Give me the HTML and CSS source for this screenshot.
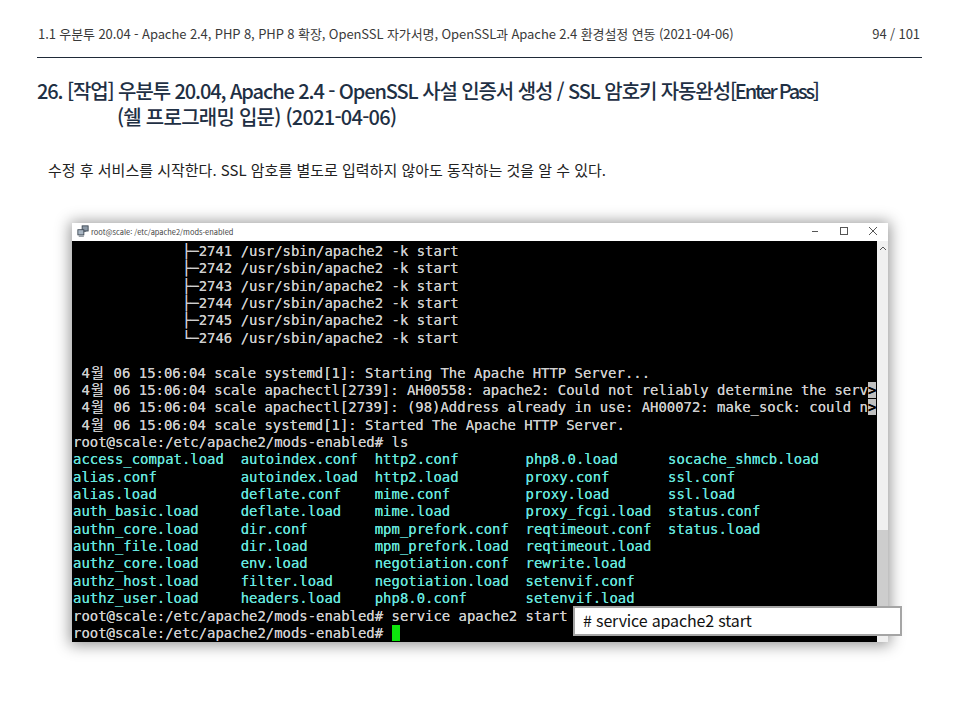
FILE: index.html
```html
<!DOCTYPE html>
<html lang="ko">
<head>
<meta charset="utf-8">
<title>Slide 94</title>
<link rel="stylesheet" href="styles.css">
</head>
<body>
<main class="slide">
  <header class="topbar">
    <span>1.1 우분투 20.04 - Apache 2.4, PHP 8, PHP 8 확장, OpenSSL 자가서명, OpenSSL과 Apache 2.4 환경설정 연동 (2021-04-06)</span>
    <span>94 / 101</span>
  </header>
  <h1 class="title">26. [작업] 우분투 20.04, Apache 2.4 - OpenSSL 사설 인증서 생성 / SSL 암호키 자동완성<span class="tight">[Enter Pass]</span><br><span class="loose">(쉘 프로그래밍 입문) (2021-04-06)</span></h1>
  <p class="lead">수정 후 서비스를 시작한다. SSL 암호를 별도로 입력하지 않아도 동작하는 것을 알 수 있다.</p>
  <figure class="window">
    <div class="titlebar">
      <svg class="app-icon" viewBox="0 0 14 14" width="12" height="12">
        <rect x="6" y="1" width="7" height="6" fill="#8d99a6" stroke="#3a4450"/>
        <rect x="1" y="5.5" width="7" height="6" fill="#a9b6c3" stroke="#3a4450"/>
        <path d="M2 13h6M8 8l3-1" stroke="#4a5663" fill="none"/>
      </svg>
      <span class="win-title">root@scale: /etc/apache2/mods-enabled</span>
      <div class="controls">
        <svg viewBox="0 0 10 10" width="10" height="10"><path d="M2 5.5h6" stroke="#555" stroke-width="1"/></svg>
        <svg viewBox="0 0 10 10" width="10" height="10"><rect x="1.5" y="1.5" width="7" height="7" fill="none" stroke="#555"/></svg>
        <svg viewBox="0 0 10 10" width="10" height="10"><path d="M1 1l8 8M9 1l-8 8" stroke="#555" fill="none"/></svg>
      </div>
    </div>
    <div class="console">
<pre class="term">             ├─2741 /usr/sbin/apache2 -k start
             ├─2742 /usr/sbin/apache2 -k start
             ├─2743 /usr/sbin/apache2 -k start
             ├─2744 /usr/sbin/apache2 -k start
             ├─2745 /usr/sbin/apache2 -k start
             └─2746 /usr/sbin/apache2 -k start

 4<span class="wide">월</span> 06 15:06:04 scale systemd[1]: Starting The Apache HTTP Server...
 4<span class="wide">월</span> 06 15:06:04 scale apachectl[2739]: AH00558: apache2: Could not reliably determine the serv<span class="more">&gt;</span>
 4<span class="wide">월</span> 06 15:06:04 scale apachectl[2739]: (98)Address already in use: AH00072: make_sock: could n<span class="more">&gt;</span>
 4<span class="wide">월</span> 06 15:06:04 scale systemd[1]: Started The Apache HTTP Server.
root@scale:/etc/apache2/mods-enabled# ls
<span class="c">access_compat.load  autoindex.conf  http2.conf        php8.0.load      socache_shmcb.load
alias.conf          autoindex.load  http2.load        proxy.conf       ssl.conf
alias.load          deflate.conf    mime.conf         proxy.load       ssl.load
auth_basic.load     deflate.load    mime.load         proxy_fcgi.load  status.conf
authn_core.load     dir.conf        mpm_prefork.conf  reqtimeout.conf  status.load
authn_file.load     dir.load        mpm_prefork.load  reqtimeout.load
authz_core.load     env.load        negotiation.conf  rewrite.load
authz_host.load     filter.load     negotiation.load  setenvif.conf
authz_user.load     headers.load    php8.0.conf       setenvif.load</span>
root@scale:/etc/apache2/mods-enabled# service apache2 start
root@scale:/etc/apache2/mods-enabled# <span class="cursor"></span></pre>
      <div class="scrollbar">
        <svg class="arrow" viewBox="0 0 8 6" width="8" height="6"><path d="M1 5l3-3 3 3" fill="none" stroke="#555"/></svg>
        <div class="thumb"></div>
        <svg class="arrow" viewBox="0 0 8 6" width="8" height="6"><path d="M1 1l3 3 3-3" fill="none" stroke="#555"/></svg>
      </div>
    </div>
    <div class="callout"><span class="callout-text"># service apache2 start</span></div>
  </figure>
</main>
</body>
</html>
```

FILE: styles.css
```css
* { box-sizing: border-box; }
html, body { margin: 0; padding: 0; background: #fff; }
body { width: 960px; height: 720px; overflow: hidden; font-family: "Noto Sans CJK KR", "Noto Sans", sans-serif; }
.slide { padding: 24px 38px 0 37px; display: flex; flex-direction: column; }
.topbar {
  display: flex; justify-content: space-between;
  height: 34px; padding: 0 2px 0 1px;
  border-bottom: 1px solid #1f2a38;
  font-size: 13px; line-height: 20px; color: #3a3a3a; letter-spacing: -.09px;
}
.title {
  margin: 20px 0 0; padding-left: 80px; text-indent: -80px;
  font-size: 20px; line-height: 26px; font-weight: 500; letter-spacing: -1.1px; color: #1f3044;
}
.tight { letter-spacing: -2.2px; }
.loose { letter-spacing: -.75px; }
.lead { margin: 30px 0 0 11px; font-size: 15px; line-height: 20px; color: #222; }
.window {
  position: relative; margin: 43px 0 0 35px; width: 816px; height: 419px;
  background: #fff; box-shadow: 0 1px 14px 2px rgba(0,0,0,.42);
  display: flex; flex-direction: column;
}
.titlebar { display: flex; align-items: center; gap: 2px; height: 18px; padding: 0 0 2px 5px; flex: none; }
.win-title { font-size: 7.45px; color: #444; }
.controls { margin-left: auto; display: flex; gap: 19px; padding-right: 10px; }
.console { flex: 1; display: flex; min-height: 0; }
.term {
  flex: 1; margin: 0; padding: 2px 0 0 1px; background: #000; color: #cfcfcf; overflow: hidden;
  font-family: "DejaVu Sans Mono", "Noto Sans CJK KR", monospace; font-size: 13.93px; line-height: 17.36px;
  text-shadow: 0 0 .6px currentColor;
}
.c { color: #66e6de; }
.wide { display: inline-block; width: 2ch; font-family: "Noto Sans CJK KR", sans-serif; line-height: 1; text-align: center; }
.more { background: #c0c0c0; color: #000; font-weight: 700; }
.cursor { display: inline-block; width: 8px; height: 16px; background: #0de50d; vertical-align: -3px; }
.scrollbar { width: 11px; background: #f0f0f0; display: flex; flex-direction: column; align-items: center; flex: none; }
.arrow { flex: none; margin: 4px 0; }
.thumb { flex: 1; margin-top: 275px; background: #cdcdcd; width: 100%; }
.callout {
  position: absolute; left: 501px; top: 383px; width: 329px; height: 30px;
  background: #fff; border: 2px solid #a5a5a5; padding-left: 8px;
  font-size: 16px; font-weight: 400; color: #111; letter-spacing: -.15px;
}
.callout-text { display: block; height: 21px; line-height: 24px; overflow: hidden; }
```
